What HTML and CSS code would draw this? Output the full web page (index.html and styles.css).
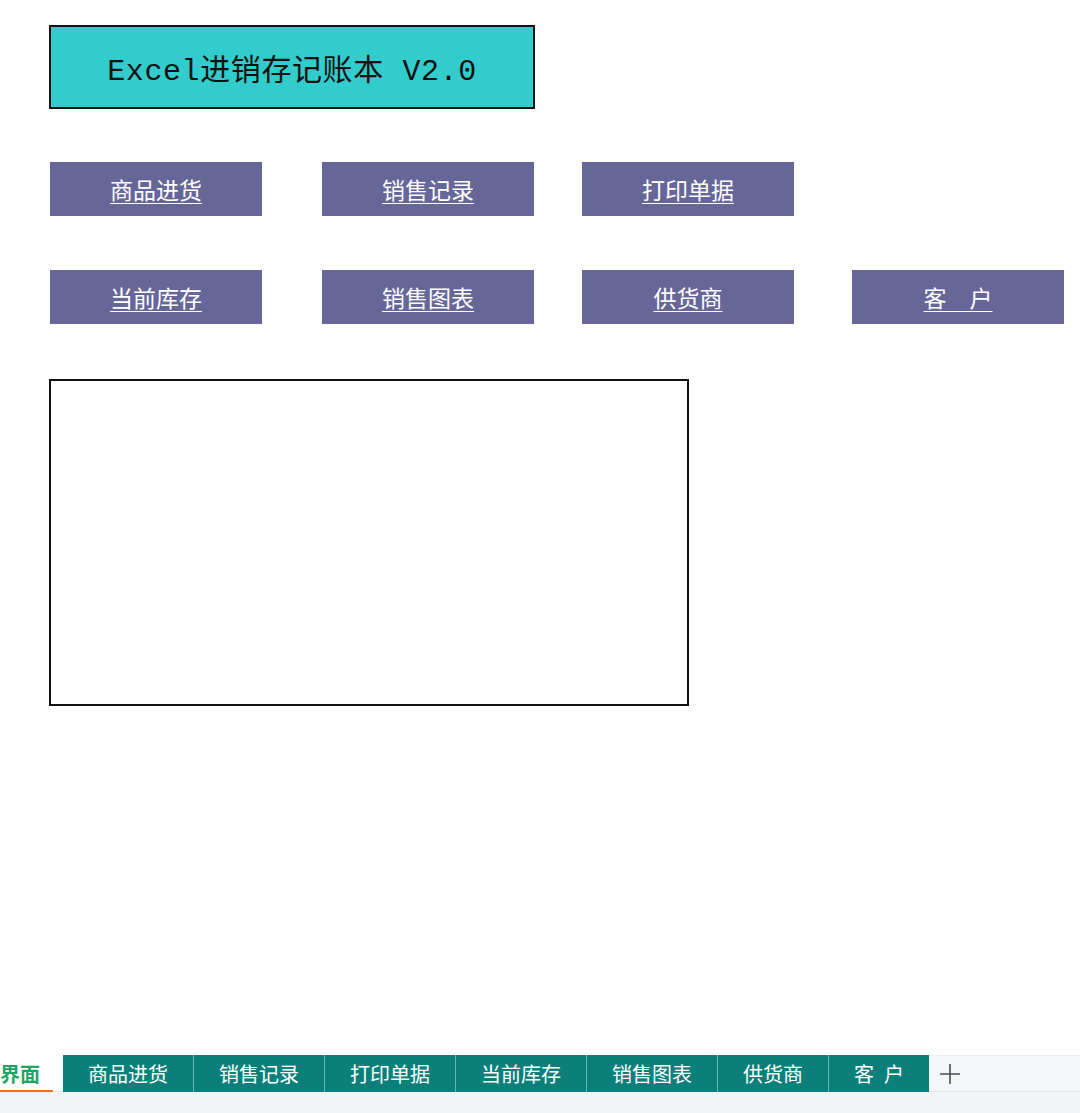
FILE: index.html
```html
<!DOCTYPE html>
<html lang="zh-CN">
<head>
    <meta charset="UTF-8">
    <title>Excel进销存记账本 V2.0</title>
    <link rel="stylesheet" href="styles.css">
</head>
<body>
    <div class="sheet">
        <div class="title">Excel进销存记账本 V2.0</div>

        <div class="menu">
            <a class="btn" href="#">商品进货</a>
            <a class="btn" href="#">销售记录</a>
            <a class="btn" href="#">打印单据</a>
            <span></span>
            <a class="btn" href="#">当前库存</a>
            <a class="btn" href="#">销售图表</a>
            <a class="btn" href="#">供货商</a>
            <a class="btn" href="#">客　户</a>
        </div>

        <div class="panel"></div>
    </div>

    <div class="tabbar">
        <div class="tabs">
            <div class="tab active">界面</div>
            <div class="tab-gap"></div>
            <div class="tab w130">商品进货</div>
            <div class="tab">销售记录</div>
            <div class="tab">打印单据</div>
            <div class="tab">当前库存</div>
            <div class="tab">销售图表</div>
            <div class="tab w111">供货商</div>
            <div class="tab w101">客&ensp;户</div>
            <div class="tab-add">
                <svg width="22" height="22" viewBox="0 0 22 22">
                    <path d="M11 1v20M1 11h20" stroke="#4a4d57" stroke-width="1.6" fill="none"/>
                </svg>
            </div>
        </div>
        <div class="status"></div>
    </div>
</body>
</html>
```

FILE: styles.css
```css
* {
    margin: 0;
    padding: 0;
    box-sizing: border-box;
}

body {
    background: #fff;
    min-height: 100vh;
    display: flex;
    flex-direction: column;
    font-family: "Noto Sans CJK SC", sans-serif;
}

.sheet {
    padding: 25px 0 0 49px;
    flex: 1;
}

.title {
    width: 486px;
    height: 84px;
    background: #33cccc;
    border: 2px solid #111;
    display: flex;
    align-items: center;
    justify-content: center;
    font-family: "Liberation Mono", "Noto Sans CJK SC", monospace;
    font-size: 30px;
    color: #111;
    letter-spacing: 0.6px;
}

.menu {
    display: grid;
    grid-template-columns: 272px 260px 270px 212px;
    row-gap: 54px;
    margin-top: 53px;
    padding-left: 1px;
}

.btn {
    width: 212px;
    height: 54px;
    background: #666699;
    color: #fff;
    font-size: 23px;
    text-decoration: underline;
    text-underline-offset: 4px;
    text-decoration-thickness: 1px;
    display: flex;
    align-items: center;
    justify-content: center;
}

.panel {
    width: 640px;
    height: 327px;
    border: 2px solid #111;
    margin-top: 55px;
}

.tabbar {
    background: #f3f4f6;
}

.tabs {
    display: flex;
    height: 37px;
    background: #fff;
}

.tab {
    width: 131px;
    background: #0b807a;
    color: #fff;
    font-size: 20px;
    display: flex;
    align-items: center;
    justify-content: center;
    border-left: 1px solid #6fb6b1;
}

.tab.w130 {
    width: 130px;
    border-left: none;
}

.tab.w111 {
    width: 111px;
}

.tab.w101 {
    width: 101px;
}

.tab.active {
    width: 53px;
    background: #fff;
    color: #1fa463;
    font-weight: bold;
    justify-content: flex-start;
    border-left: none;
    border-bottom: 2px solid #f07020;
    padding-top: 2px;
}

.tab-gap {
    width: 10px;
    border-bottom: 1px solid #e6e8eb;
}

.tab-add {
    flex: 1;
    background: #f5f6f8;
    border-top: 1px solid #eceef1;
    border-bottom: 1px solid #e4e6e9;
    display: flex;
    align-items: center;
    padding-left: 10px;
}

.status {
    height: 21px;
    background: #f3f4f6;
}
```
